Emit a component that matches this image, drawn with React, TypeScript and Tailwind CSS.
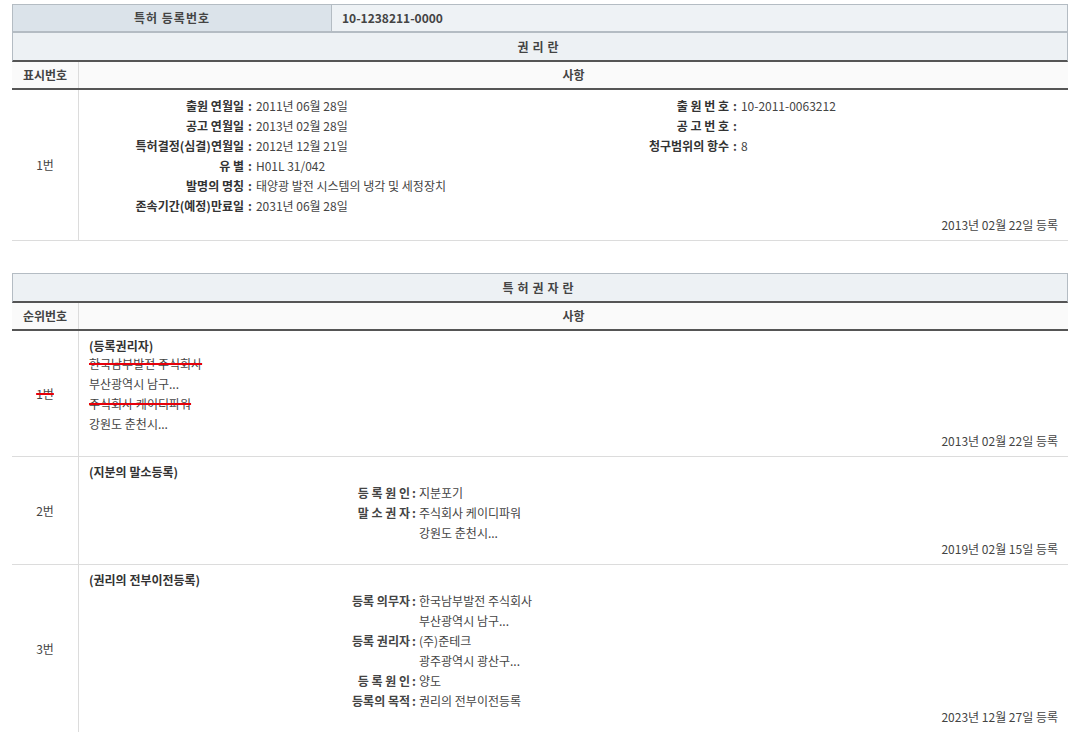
const F = { fontFamily: '"Noto Sans CJK KR", "Liberation Sans", sans-serif' };

function KV({ k, v, w }: { k: string; v: string; w: number }) {
  return (
    <div className="flex h-[20px] items-center">
      <span className="text-right font-bold text-[#333]" style={{ width: w }}>{k}</span>
      <span className="px-1 font-bold">:</span>
      <span>{v}</span>
    </div>
  );
}

function Holder({ title, items, date }: { title: string; items: [string, string[]][]; date: string }) {
  return (
    <div className="flex flex-col px-[10px] pt-[6px] pb-[6px]">
      <div className="h-[20px] font-bold text-[#333]">{title}</div>
      {items.map(([k, vs], i) => (
        <div key={i}>
          {vs.map((v, j) => (
            <div key={j} className="flex h-[20px] items-center">
              <span className="w-[321px] text-right font-bold">{j === 0 ? k : ""}</span>
              <span className="w-[8px] px-[2px] font-bold">{j === 0 ? ":" : ""}</span>
              <span className="pl-[1px]">{v}</span>
            </div>
          ))}
        </div>
      ))}
      <div className="-mt-[3px] text-right">{date}</div>
    </div>
  );
}

function Row({ n, children, strike }: { n: string; children: React.ReactNode; strike?: boolean }) {
  return (
    <div className="flex border-b border-[#dcdcdc]">
      <div className="flex w-[67px] shrink-0 items-center justify-center border-r border-[#dcdcdc]">
        <span className={strike ? "line-through decoration-red-600 decoration-2" : ""}>{n}</span>
      </div>
      <div className="flex-1">{children}</div>
    </div>
  );
}

function Head({ title, col }: { title: string; col: string }) {
  return (
    <>
      <div className="flex h-[30px] items-center justify-center border-x border-t border-b-2 border-[#b4bcc3] border-b-[#555] bg-[#edf1f4] font-bold tracking-[4px]">{title}</div>
      <div className="flex h-[28px] border-b-2 border-[#555] bg-[#fafafa] font-bold">
        <div className="flex w-[67px] items-center justify-center border-r border-[#dcdcdc]">{col}</div>
        <div className="flex flex-1 items-center justify-center">사항</div>
      </div>
    </>
  );
}

export default function App() {
  return (
    <div className="h-[732px] w-[1068px] overflow-hidden bg-white pl-[12px] pt-[4px] text-[12px] text-[#444]" style={F}>
      <div className="flex h-[28px] border border-[#b4bcc3] font-bold">
        <div className="flex w-[318px] items-center justify-center bg-[#dbe3ea] tracking-[1px]">특허 등록번호</div>
        <div className="flex flex-1 items-center border-l border-[#b4bcc3] bg-[#eef2f5] pl-[10px]">10-1238211-0000</div>
      </div>
      <Head title="권리란" col="표시번호" />
      <Row n="1번">
        <div className="flex flex-col pt-[6px] pb-[6px] pr-[10px]">
          <div className="flex">
            <div className="w-[520px]">
              <KV w={165} k="출원 연월일" v="2011년 06월 28일" />
              <KV w={165} k="공고 연월일" v="2013년 02월 28일" />
              <KV w={165} k="특허결정(심결)연월일" v="2012년 12월 21일" />
              <KV w={165} k="유 별" v="H01L 31/042" />
              <KV w={165} k="발명의 명칭" v="태양광 발전 시스템의 냉각 및 세정장치" />
              <KV w={165} k="존속기간(예정)만료일" v="2031년 06월 28일" />
            </div>
            <div>
              <KV w={130} k="출 원 번 호" v="10-2011-0063212" />
              <KV w={130} k="공 고 번 호" v="" />
              <KV w={130} k="청구범위의 항수" v="8" />
            </div>
          </div>
          <div className="text-right">2013년 02월 22일 등록</div>
        </div>
      </Row>
      <div className="h-[32px]" />
      <Head title="특허권자란" col="순위번호" />
      <Row n="1번" strike>
        <div className="flex flex-col px-[10px] pt-[6px] pb-[6px]">
          <div className="h-[18px] font-bold text-[#333]">(등록권리자)</div>
          <div className="h-[20px]"><span className="line-through decoration-red-600 decoration-2">한국남부발전 주식회사</span></div>
          <div className="h-[20px]">부산광역시 남구...</div>
          <div className="h-[20px]"><span className="line-through decoration-red-600 decoration-2">주식회사 케이디파워</span></div>
          <div className="h-[20px]">강원도 춘천시...</div>
          <div className="-mt-[3px] text-right">2013년 02월 22일 등록</div>
        </div>
      </Row>
      <Row n="2번">
        <Holder title="(지분의 말소등록)" date="2019년 02월 15일 등록" items={[["등 록 원 인", ["지분포기"]], ["말 소 권 자", ["주식회사 케이디파워", "강원도 춘천시..."]]]} />
      </Row>
      <Row n="3번">
        <Holder title="(권리의 전부이전등록)" date="2023년 12월 27일 등록" items={[["등록 의무자", ["한국남부발전 주식회사", "부산광역시 남구..."]], ["등록 권리자", ["(주)준테크", "광주광역시 광산구..."]], ["등 록 원 인", ["양도"]], ["등록의 목적", ["권리의 전부이전등록"]]]} />
      </Row>
    </div>
  );
}
